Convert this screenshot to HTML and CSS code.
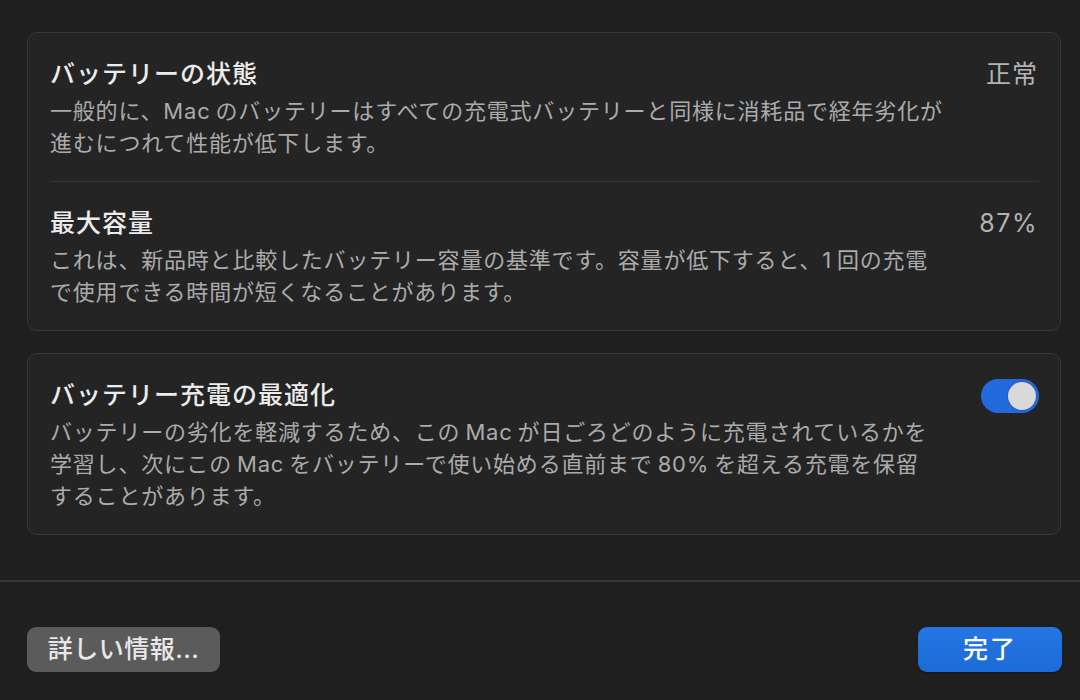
FILE: index.html
```html
<!DOCTYPE html>
<html lang="ja">
<head>
<meta charset="utf-8">
<link rel="stylesheet" href="styles.css">
</head>
<body>
<div class="sheet">
  <div class="content">
    <section class="card">
      <div class="row">
        <div class="text">
          <div class="title">バッテリーの状態</div>
          <div class="desc">一般的に、<span class="lat end">Mac</span>のバッテリーはすべての充電式バッテリーと同様に消耗品で経年劣化が<br>進むにつれて性能が低下します。</div>
        </div>
        <div class="value">正常</div>
      </div>
      <div class="sep"></div>
      <div class="row">
        <div class="text">
          <div class="title">最大容量</div>
          <div class="desc">これは、新品時と比較したバッテリー容量の基準です。容量が低下すると、<span class="lat end">1</span>回の充電<br>で使用できる時間が短くなることがあります。</div>
        </div>
        <div class="value num">87%</div>
      </div>
    </section>
    <section class="card">
      <div class="row">
        <div class="text">
          <div class="title">バッテリー充電の最適化</div>
          <div class="desc">バッテリーの劣化を軽減するため、この<span class="lat">Mac</span>が日ごろどのように充電されているかを<br>学習し、次にこの<span class="lat">Mac</span>をバッテリーで使い始める直前まで<span class="lat">80%</span>を超える充電を保留<br>することがあります。</div>
        </div>
        <div class="toggle"><div class="knob"></div></div>
      </div>
    </section>
  </div>
  <div class="rule"></div>
  <div class="footer">
    <button class="btn secondary">詳しい情報...</button>
    <button class="btn primary">完了</button>
  </div>
</div>
</body>
</html>
```

FILE: styles.css
```css
html, body {
  margin: 0;
  padding: 0;
  background: #1f1f1f;
  width: 1080px;
  height: 700px;
  overflow: hidden;
}
body {
  font-family: Inter, "Noto Sans CJK JP", sans-serif;
  color: #e9e9e9;
}
.sheet {
  display: flex;
  flex-direction: column;
}
.content {
  display: flex;
  flex-direction: column;
  gap: 22px;
  padding: 32px 19px 0 27px;
}
.card {
  background: #242424;
  border: 1px solid #393939;
  border-radius: 10px;
  padding: 0 21px 0 22px;
}
.row {
  display: flex;
  align-items: flex-start;
  justify-content: space-between;
  padding: 24px 0 22px;
}
.text {
  display: flex;
  flex-direction: column;
  gap: 4px;
}
.title {
  font-size: 25px;
  line-height: 34px;
  font-weight: 500;
  letter-spacing: 1px;
  color: #ececec;
}
.desc {
  font-size: 22px;
  line-height: 32px;
  font-weight: 400;
  letter-spacing: 0.8px;
  color: #ababab;
  white-space: nowrap;
}
.lat {
  margin: 0 5px;
}
.lat.end {
  margin: 0 5px 0 0;
}
.value {
  font-size: 25px;
  line-height: 34px;
  font-weight: 400;
  letter-spacing: 1px;
  color: #b3b3b3;
  margin-right: 1px;
}
.value.num {
  font-size: 25px;
  letter-spacing: 1.5px;
}
.sep {
  height: 1px;
  background: #343434;
}
.toggle {
  width: 58px;
  height: 34px;
  border-radius: 17px;
  background: #2369de;
  display: flex;
  align-items: center;
  justify-content: flex-end;
  padding: 0 3px;
  box-sizing: border-box;
  margin-top: 1px;
}
.knob {
  width: 28px;
  height: 28px;
  border-radius: 50%;
  background: #d9d9d9;
  box-shadow: 0 0 2px rgba(0,0,0,0.35);
}
.rule {
  margin-top: 45px;
  height: 2px;
  background: #363636;
}
.footer {
  display: flex;
  justify-content: space-between;
  padding: 45px 18px 0 27px;
}
.btn {
  font-family: Inter, "Noto Sans CJK JP", sans-serif;
  font-size: 25px;
  font-weight: 500;
  height: 45px;
  border: none;
  border-radius: 9px;
  padding: 0;
  line-height: 45px;
}
.secondary {
  width: 193px;
  background: #5b5b5b;
  color: #e8e8e8;
  letter-spacing: 0.5px;
}
.primary {
  width: 144px;
  background: linear-gradient(#2575e3, #1b6bd8);
  color: #ffffff;
  letter-spacing: 2px;
  box-shadow: 0 1px 2px rgba(0,0,0,0.4);
}
```
